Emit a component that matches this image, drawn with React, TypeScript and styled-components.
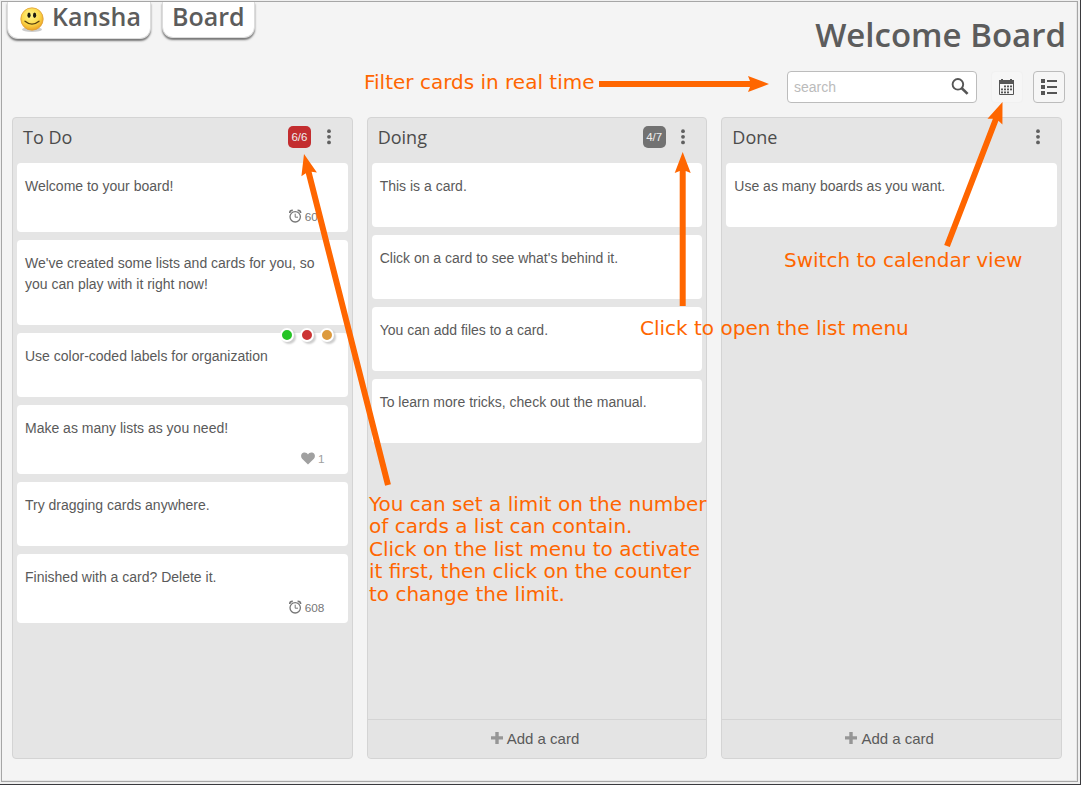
import React from 'react';
import styled, { createGlobalStyle } from 'styled-components';

const Global = createGlobalStyle`
  * { box-sizing: border-box; }
  body { margin: 0; background: #f4f4f4; overflow: hidden; }
`;

const sans = `'Liberation Sans', Arial, sans-serif`;
const heading = `'Open Sans', 'Noto Sans', sans-serif`;

const Desktop = styled.div`
  position: relative;
  width: 1081px;
  height: 785px;
  background: #efefef;
  border-right: 1px solid #3a3a3e;
  border-bottom: 1px solid #3a3a3e;
  padding: 1px 2px 2px 1px;
  font-family: ${sans};
  color: #555;
`;

const Frame = styled.div`
  height: 781px;
  background: #f4f4f4;
  border: 1px solid #a6a6a6;
  box-shadow: inset -1px -1px 0 #e6e6e6;
  display: flex;
  flex-direction: column;
`;

const Header = styled.header`
  display: flex;
  justify-content: space-between;
  height: 115px;
  padding: 0 12px 0 5px;
`;

const Tabs = styled.nav`
  display: flex;
  align-items: flex-start;
  gap: 11px;
`;

const Tab = styled.div<{ $w: number; $h: number; $pad: number }>`
  display: flex;
  align-items: center;
  width: ${(p) => p.$w}px;
  height: ${(p) => p.$h}px;
  padding: 0 0 8px ${(p) => p.$pad}px;
  background: #fff;
  border-radius: 0 0 11px 11px;
  border: 1px solid #dcdcdc;
  border-top: 0;
  box-shadow: 0 2px 2px #777;
  font: 600 25px/36px ${heading};
  color: #5c5c5c;
  white-space: nowrap;
  svg { margin-right: 8px; margin-top: 7px; flex: none; }
`;

const HeaderRight = styled.div`
  display: flex;
  flex-direction: column;
  align-items: flex-end;
`;

const Title = styled.h1`
  margin: 9px -1px 0 0;
  font: 600 33px/48px ${heading};
  color: #5c5c5c;
  white-space: nowrap;
`;

const Tools = styled.div`
  display: flex;
  margin-top: 12px;
`;

const Search = styled.div`
  display: flex;
  align-items: center;
  justify-content: space-between;
  width: 190px;
  height: 32px;
  padding: 0 7px 0 6px;
  background: #fff;
  border: 1px solid #bcbcbc;
  border-radius: 4px;
  font-size: 14px;
  color: #bbb;
`;

const ToolButton = styled.div<{ $framed?: boolean; $gap: number }>`
  display: flex;
  align-items: center;
  justify-content: center;
  width: 32px;
  height: 32px;
  margin-left: ${(p) => p.$gap}px;
  border: 1px solid ${(p) => (p.$framed ? '#bcbcbc' : '#f1f1f1')};
  border-radius: 4px;
  background: #f6f6f6;
`;

const Board = styled.main`
  display: grid;
  grid-template-columns: repeat(3, 1fr);
  column-gap: 14px;
  width: 1060px;
  height: 642px;
  padding-left: 10px;
`;

const List = styled.section`
  display: flex;
  flex-direction: column;
  background: #e5e5e5;
  border: 1px solid #d4d4d4;
  border-radius: 4px;
`;

const ListHead = styled.div`
  display: flex;
  align-items: center;
  height: 45px;
  padding: 0 21px 7px 10px;
  svg { flex: none; }
`;

const ListTitle = styled.h2`
  flex: 1;
  margin: 0;
  font: 400 18px/26px ${heading};
  color: #4c4c4c;
`;

const Counter = styled.span<{ $full?: boolean }>`
  width: 23px;
  height: 22px;
  margin: -1px 15.7px 0 0;
  border-radius: 5px;
  background: ${(p) => (p.$full ? '#c32d2f' : '#727272')};
  color: #eee;
  font-size: 11.5px;
  line-height: 22px;
  text-align: center;
`;

const Cards = styled.div`
  display: flex;
  flex-direction: column;
  flex: 1;
  gap: 8px;
  padding: 0 4px;
`;

const Card = styled.article<{ $h: number }>`
  position: relative;
  height: ${(p) => p.$h}px;
  padding: 13px 23px 0 8px;
  background: #fff;
  border-radius: 4px;
  font-size: 14px;
  line-height: 21px;
  color: #5a5a5a;
  display: flex;
  flex-direction: column;
`;

const Meta = styled.div<{ $pale?: boolean }>`
  display: flex;
  justify-content: flex-end;
  align-items: center;
  gap: 3px;
  height: 16px;
  margin-top: 11px;
  font-size: 11.8px;
  color: ${(p) => (p.$pale ? '#a0a0a0' : '#777')};
  span {
    min-width: ${(p) => (p.$pale ? 0 : 20)}px;
    padding-top: 2px;
  }
`;

const Labels = styled.div`
  position: absolute;
  top: -5px;
  right: 14px;
  display: flex;
  gap: 6px;
`;

const Dot = styled.i<{ $c: string }>`
  width: 14px;
  height: 14px;
  border: 2px solid #fff;
  border-radius: 50%;
  background: ${(p) => p.$c};
  box-shadow: 2px 2px 2px rgba(0, 0, 0, 0.2);
`;

const AddCard = styled.div`
  display: flex;
  align-items: center;
  justify-content: center;
  gap: 4px;
  height: 39px;
  padding: 0 4px 2px 0;
  border-top: 1px solid #d4d4d4;
  background: #e4e4e4;
  border-radius: 0 0 4px 4px;
  font-size: 15px;
  color: #5a5a5a;
`;

const Note = styled.div<{ $x: number; $y: number }>`
  position: absolute;
  left: ${(p) => p.$x}px;
  top: ${(p) => p.$y}px;
  font: 20px/22.5px 'DejaVu Sans', sans-serif;
  color: #ff6600;
  white-space: pre;
`;

const Arrows = styled.svg`
  position: absolute;
  left: 0;
  top: 0;
  pointer-events: none;
`;

const Smiley = () => (
  <svg width="24" height="26" viewBox="0 0 24 26">
    <defs>
      <radialGradient id="face" cx="45%" cy="35%" r="65%">
        <stop offset="0" stopColor="#fff68e" />
        <stop offset="0.6" stopColor="#fcd94b" />
        <stop offset="1" stopColor="#eda323" />
      </radialGradient>
    </defs>
    <ellipse cx="12" cy="22.5" rx="10" ry="2.5" fill="#ccc" />
    <circle cx="12" cy="12" r="11.2" fill="url(#face)" stroke="#dfa03a" strokeWidth="0.8" />
    <ellipse cx="9" cy="8.3" rx="1.6" ry="2.8" fill="#1c1a10" />
    <ellipse cx="14.6" cy="8.3" rx="1.6" ry="2.8" fill="#1c1a10" />
    <path d="M5 14.2Q12 20 19 14.2" fill="none" stroke="#5a4310" strokeWidth="1.3" strokeLinecap="round" />
  </svg>
);

const SearchIcon = () => (
  <svg width="18" height="18" viewBox="0 0 18 18" fill="none" stroke="#555">
    <circle cx="6.9" cy="6.3" r="5.3" strokeWidth="1.9" />
    <path d="M10.8 10.3L16.6 15.9" strokeWidth="2.6" />
  </svg>
);

const CalendarIcon = () => (
  <svg width="16" height="18" viewBox="0 0 16 18" fill="#555">
    <path d="M0 2h2V1h2v1h7V1h2v1h2v4H0z" />
    <path d="M.5 5v11.5h14V5" fill="none" stroke="#555" />
    {[8, 11, 14].map((y, r) =>
      [2, 5, 8, 11].map((x, c) =>
        (r === 0 && c === 0) || (r === 2 && c === 3) ? null : (
          <rect key={`${x}-${y}`} x={x} y={y - 0.5} width="2" height="1.8" />
        ),
      ),
    )}
  </svg>
);

const ListIcon = () => (
  <svg width="16" height="16" viewBox="0 0 16 16" fill="#555">
    {[0, 6, 12].map((y) => (
      <g key={y}>
        <rect y={y} width="4" height="4" />
        <rect x="6" y={y + 1} width="10" height="2" />
      </g>
    ))}
  </svg>
);

const Kebab = () => (
  <svg width="4" height="16" viewBox="0 0 4 16" fill="#606060">
    <circle cx="2" cy="2.2" r="1.9" />
    <circle cx="2" cy="7.8" r="1.9" />
    <circle cx="2" cy="13.4" r="1.9" />
  </svg>
);

const Clock = () => (
  <svg width="13" height="14" viewBox="0 0 13 14" fill="none" stroke="#777">
    <circle cx="6.2" cy="7.8" r="5.2" strokeWidth="1.3" />
    <path d="M6.2 4.7V8.2H9" />
    <path d="M.8 4Q.8 1.2 3.8 1.3M8.6 1.3Q11.6 1.2 11.6 4" strokeWidth="1.7" />
  </svg>
);

const Heart = () => (
  <svg width="14" height="13" viewBox="0 0 14 13" fill="#a0a0a0">
    <path d="M7 12.6L1.1 6.7C-.6 4.9-.1 1.8 2.1.8 4-.1 6.2.8 7 2.5 7.8.8 10-.1 11.9.8c2.2 1 2.7 4.1 1 5.9z" />
  </svg>
);

const Plus = () => (
  <svg width="12" height="12" viewBox="0 0 12 12" fill="#969696">
    <path d="M4.3 0h3.4v4.3H12v3.2H7.7V12H4.3V7.5H0V4.3h4.3z" />
  </svg>
);

type CardData = { text: string; h?: number; due?: string; votes?: number; labels?: string[] };
type ListData = { title: string; count?: string; full?: boolean; canAdd?: boolean; cards: CardData[] };

const lists: ListData[] = [
  {
    title: 'To Do',
    count: '6/6',
    full: true,
    cards: [
      { text: 'Welcome to your board!', h: 69, due: '60' },
      { text: "We've created some lists and cards for you, so you can play with it right now!", h: 85 },
      { text: 'Use color-coded labels for organization', labels: ['#25c425', '#cc3333', '#dd9a3c'] },
      { text: 'Make as many lists as you need!', h: 69, votes: 1 },
      { text: 'Try dragging cards anywhere.' },
      { text: 'Finished with a card? Delete it.', h: 69, due: '608' },
    ],
  },
  {
    title: 'Doing',
    count: '4/7',
    canAdd: true,
    cards: [
      { text: 'This is a card.' },
      { text: "Click on a card to see what's behind it." },
      { text: 'You can add files to a card.' },
      { text: 'To learn more tricks, check out the manual.' },
    ],
  },
  { title: 'Done', canAdd: true, cards: [{ text: 'Use as many boards as you want.' }] },
];

type ArrowData = { from: [number, number]; to: [number, number] };

const arrows: ArrowData[] = [
  { from: [599, 84], to: [769, 84] },
  { from: [388, 485], to: [304, 154] },
  { from: [682.7, 306], to: [682.7, 152] },
  { from: [947, 246], to: [1002.5, 102] },
];

const Arrow = ({ from, to }: ArrowData) => {
  const dx = to[0] - from[0];
  const dy = to[1] - from[1];
  const len = Math.hypot(dx, dy);
  const angle = (Math.atan2(dy, dx) * 180) / Math.PI;
  return (
    <g transform={`translate(${from[0]} ${from[1]}) rotate(${angle})`} fill="#ff6600">
      <path d={`M0 -3H${len - 19}L${len - 21} -8L${len} 0L${len - 21} 8L${len - 19} 3H0z`} />
    </g>
  );
};

export default function App() {
  return (
    <Desktop>
      <Global />
      <Frame>
        <Header>
          <Tabs>
            <Tab $w={144} $h={37} $pad={12}>
              <Smiley />
              Kansha
            </Tab>
            <Tab $w={93} $h={36} $pad={9}>
              Board
            </Tab>
          </Tabs>
          <HeaderRight>
            <Title>Welcome Board</Title>
            <Tools>
              <Search>
                search
                <SearchIcon />
              </Search>
              <ToolButton $gap={14}>
                <CalendarIcon />
              </ToolButton>
              <ToolButton $gap={10} $framed>
                <ListIcon />
              </ToolButton>
            </Tools>
          </HeaderRight>
        </Header>
        <Board>
          {lists.map((list) => (
            <List key={list.title}>
              <ListHead>
                <ListTitle>{list.title}</ListTitle>
                {list.count && <Counter $full={list.full}>{list.count}</Counter>}
                <Kebab />
              </ListHead>
              <Cards>
                {list.cards.map((card) => (
                  <Card key={card.text} $h={card.h ?? 64}>
                    {card.labels && (
                      <Labels>
                        {card.labels.map((c) => (
                          <Dot key={c} $c={c} />
                        ))}
                      </Labels>
                    )}
                    <div>{card.text}</div>
                    {card.due && (
                      <Meta>
                        <Clock />
                        <span>{card.due}</span>
                      </Meta>
                    )}
                    {card.votes && (
                      <Meta $pale>
                        <Heart />
                        <span>{card.votes}</span>
                      </Meta>
                    )}
                  </Card>
                ))}
              </Cards>
              {list.canAdd && (
                <AddCard>
                  <Plus />
                  Add a card
                </AddCard>
              )}
            </List>
          ))}
        </Board>
      </Frame>
      <Arrows width="1081" height="785">
        {arrows.map((a) => (
          <Arrow key={a.from.join()} {...a} />
        ))}
      </Arrows>
      <Note $x={364} $y={71}>Filter cards in real time</Note>
      <Note $x={784} $y={249}>Switch to calendar view</Note>
      <Note $x={640} $y={316.5}>Click to open the list menu</Note>
      <Note $x={369} $y={492.5}>
        {'You can set a limit on the number\nof cards a list can contain.\nClick on the list menu to activate\nit first, then click on the counter\nto change the limit.'}
      </Note>
    </Desktop>
  );
}
